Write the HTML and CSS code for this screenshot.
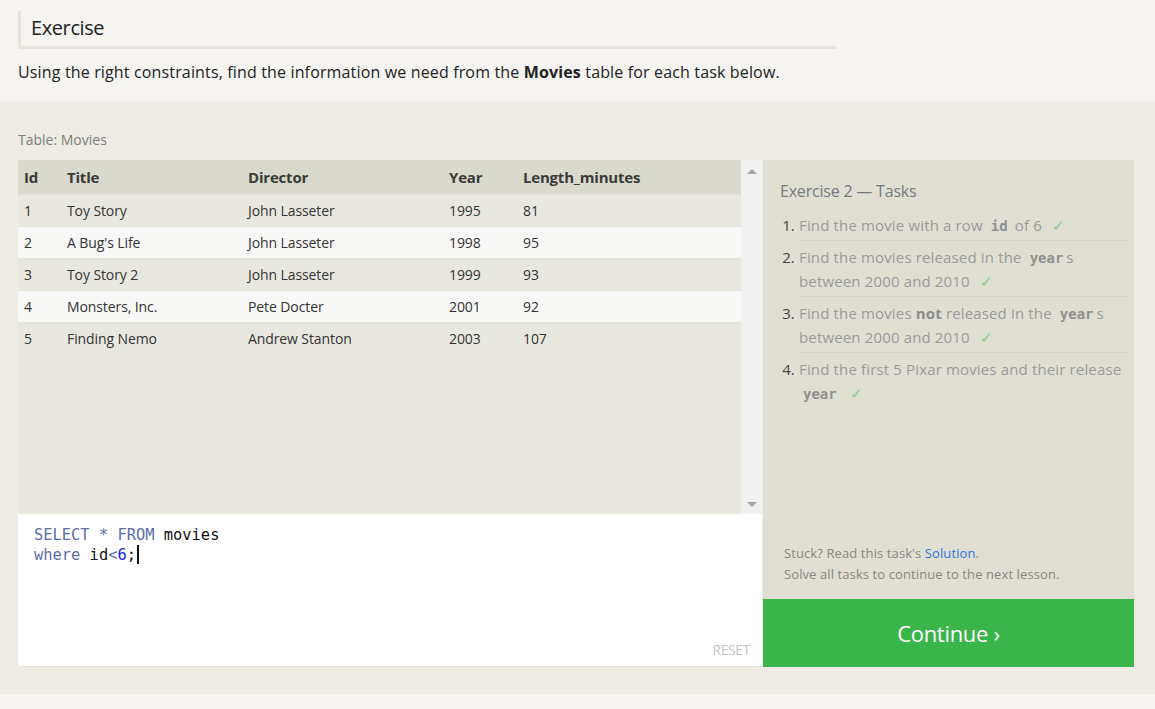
FILE: index.html
```html
<!DOCTYPE html>
<html>
<head>
<meta charset="utf-8">
<link rel="stylesheet" href="styles.css">
</head>
<body>
<section class="intro">
  <h1 class="heading">Exercise</h1>
  <p class="lead">Using the right constraints, find the information we need from the <strong>Movies</strong> table for each task below.</p>
</section>
<section class="main">
  <div class="caption">Table: Movies</div>
  <div class="workspace">
    <div class="left">
      <div class="results">
        <div class="table-wrap">
          <table class="grid">
            <thead>
              <tr><th class="c-id">Id</th><th class="c-title">Title</th><th class="c-dir">Director</th><th class="c-year">Year</th><th>Length_minutes</th></tr>
            </thead>
            <tbody>
              <tr><td>1</td><td>Toy Story</td><td>John Lasseter</td><td>1995</td><td>81</td></tr>
              <tr><td>2</td><td>A Bug's Life</td><td>John Lasseter</td><td>1998</td><td>95</td></tr>
              <tr><td>3</td><td>Toy Story 2</td><td>John Lasseter</td><td>1999</td><td>93</td></tr>
              <tr><td>4</td><td>Monsters, Inc.</td><td>Pete Docter</td><td>2001</td><td>92</td></tr>
              <tr><td>5</td><td>Finding Nemo</td><td>Andrew Stanton</td><td>2003</td><td>107</td></tr>
            </tbody>
          </table>
        </div>
        <div class="scrollbar">
          <span class="arrow up"></span>
          <span class="arrow down"></span>
        </div>
      </div>
      <div class="editor">
        <pre class="code"><span class="kw">SELECT</span> <span class="kw">*</span> <span class="kw">FROM</span> movies
<span class="kw">where</span> id<span class="kw">&lt;</span><span class="num">6</span>;<span class="cursor"></span></pre>
        <div class="reset">RESET</div>
      </div>
    </div>
    <div class="right">
      <div class="tasks">
        <h2 class="tasks-title">Exercise 2 — Tasks</h2>
        <ol class="task-list">
          <li>Find the movie with a row <code>id</code> of 6 <span class="check">✓</span></li>
          <li>Find the movies released in the <code>year</code>s between 2000 and 2010 <span class="check">✓</span></li>
          <li>Find the movies <b>not</b> released in the <code>year</code>s between 2000 and 2010 <span class="check">✓</span></li>
          <li>Find the first 5 Pixar movies and their release <code>year</code> <span class="check">✓</span></li>
        </ol>
        <div class="help">
          <div>Stuck? Read this task's <a class="link">Solution</a>.</div>
          <div>Solve all tasks to continue to the next lesson.</div>
        </div>
      </div>
      <div class="continue">Continue ›</div>
    </div>
  </div>
</section>
</body>
</html>
```

FILE: styles.css
```css
* { box-sizing: border-box; }
html, body { margin: 0; padding: 0; }
body {
  background: #f5f4f0;
  font-family: "Open Sans", "Noto Sans", sans-serif;
  color: #222;
  width: 1155px;
  height: 709px;
  overflow: hidden;
}
.intro {
  padding: 11px 18px 0;
  height: 101px;
}
.heading {
  margin: 0;
  width: 818px;
  font-size: 20px;
  font-weight: 400;
  line-height: 32px;
  padding: 1px 0 2px 10px;
  border-left: 3px solid #e6e4da;
  border-bottom: 3px solid #e6e4da;
  color: #222;
  letter-spacing: -0.4px;
}
.lead {
  margin: 12px 0 0;
  font-size: 16px;
  line-height: 22px;
  letter-spacing: 0.15px;
  color: #222;
}
.lead strong { font-weight: 700; }
.main {
  background: #eeece5;
  padding: 29px 21px 27px 18px;
}
.caption {
  font-size: 14px;
  line-height: 20px;
  color: #7c7c7c;
  margin-bottom: 10px;
}
.workspace {
  display: flex;
  gap: 1px;
}
.left {
  width: 744px;
  display: flex;
  flex-direction: column;
}
.results {
  height: 354px;
  display: flex;
  background: #e9e8e0;
}
.table-wrap { flex: 1; }
.grid {
  width: 100%;
  border-collapse: collapse;
  font-size: 14px;
  color: #333;
}
.grid th {
  background: #dad9cd;
  text-align: left;
  font-weight: 700;
  font-size: 15px;
  height: 34px;
  padding: 0 0 0 6px;
  color: #3a3a3a;
  letter-spacing: -0.2px;
}
.grid td {
  height: 32px;
  padding: 0 0 0 6px;
  border-top: 1px solid #e3e2da;
  letter-spacing: -0.1px;
}
.grid tbody tr:nth-child(even) td { background: #f8f8f7; }
.c-id { width: 43px; }
.c-title { width: 181px; }
.c-dir { width: 201px; }
.c-year { width: 74px; }
.scrollbar {
  width: 21px;
  background: #f1f1f1;
  display: flex;
  flex-direction: column;
  justify-content: space-between;
  align-items: center;
  padding: 9px 0 7px;
}
.arrow {
  width: 0; height: 0;
  border-left: 5px solid transparent;
  border-right: 5px solid transparent;
}
.arrow.up { border-bottom: 5px solid #a3a3a3; }
.arrow.down { border-top: 5px solid #a3a3a3; }
.editor {
  height: 153px;
  background: #fff;
  border-bottom: 1px solid #e3e1d8;
  padding: 11px 16px 7px;
  display: flex;
  flex-direction: column;
  justify-content: space-between;
}
.code {
  margin: 0;
  font-family: "DejaVu Sans Mono", "Liberation Mono", monospace;
  font-size: 15.4px;
  line-height: 20px;
  color: #111;
}
.kw { color: #5a6ea8; }
.num { color: #2626d9; }
.cursor {
  display: inline-block;
  width: 2px;
  height: 19px;
  background: #111;
  vertical-align: -4px;
  margin-left: 1px;
}
.reset {
  align-self: flex-end;
  font-size: 14px;
  color: #c4c4c4;
  letter-spacing: -0.4px;
  margin-right: -4px;
}
.right {
  width: 371px;
  display: flex;
  flex-direction: column;
}
.tasks {
  height: 439px;
  background: #e1dfd4;
  padding: 20px 7px 14px 17px;
  display: flex;
  flex-direction: column;
}
.tasks-title {
  margin: 0 0 7px;
  font-size: 16px;
  font-weight: 400;
  line-height: 22px;
  color: #757b82;
  letter-spacing: -0.2px;
}
.task-list {
  margin: 0;
  padding: 0 0 0 19px;
  font-size: 15px;
  line-height: 24px;
  color: #9a9a9a;
  letter-spacing: 0.15px;
}
.task-list li {
  padding: 4px 0 3px;
  border-bottom: 1px solid #d6d4c9;
}
.task-list li:last-child { border-bottom: none; }
.task-list li::marker { color: #444; }
.task-list code {
  font-family: "DejaVu Sans Mono", "Liberation Mono", monospace;
  font-weight: 700;
  font-size: 14px;
  line-height: 1;
  color: #8f8f8f;
  padding: 0 3px 0 4px;
  letter-spacing: 0;
}
.task-list b { font-weight: 700; color: #8a8a8a; }
.check {
  color: #84cc90;
  margin-left: 6px;
}
.help {
  margin-top: auto;
  padding-left: 4px;
  font-size: 13px;
  line-height: 21px;
  color: #8a8580;
  letter-spacing: 0.1px;
}
.link { color: #2f73d8; }
.continue {
  height: 68px;
  background: #3ab54a;
  color: #fff;
  font-size: 22px;
  display: flex;
  align-items: center;
  justify-content: center;
  letter-spacing: -0.3px;
}
```
